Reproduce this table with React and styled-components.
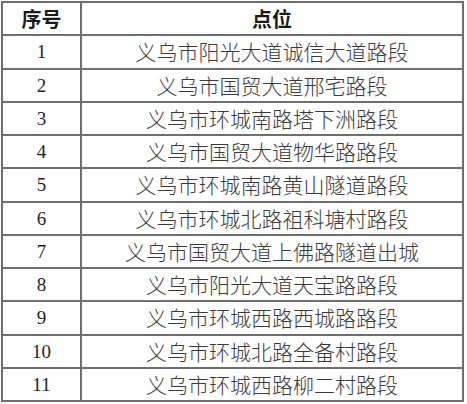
import React from "react";
import styled, { createGlobalStyle } from "styled-components";

const Global = createGlobalStyle`
  html, body { margin: 0; padding: 0; background: #fff; }
`;

const Table = styled.table`
  margin: 1px 0 0 1px;
  width: 463px;
  border-collapse: collapse;
  table-layout: fixed;
  border: 2px solid #6e6e6e;
`;

const Row = styled.tr`
  height: 33.25px;
`;

const Cell = styled.td`
  border: 2px solid #6e6e6e;
  padding: 0;
  text-align: center;
  vertical-align: middle;
  line-height: 1;
  color: ${(p) => (p.$num ? "#1e1e1e" : "#3a3a3a")};
  font-family: ${(p) =>
    p.$num
      ? '"Liberation Serif", serif'
      : '"Noto Sans CJK SC", sans-serif'};
  font-size: ${(p) => (p.$num ? "19px" : "21px")};
  font-weight: ${(p) => (p.$num ? 400 : 300)};
`;

const Head = styled.th`
  border: 2px solid #6e6e6e;
  padding: 0;
  text-align: center;
  vertical-align: middle;
  line-height: 1;
  color: #1a1a1a;
  font-family: "Noto Sans CJK SC", sans-serif;
  font-size: 20px;
  font-weight: 700;
`;

const rows = [
  "义乌市阳光大道诚信大道路段",
  "义乌市国贸大道邢宅路段",
  "义乌市环城南路塔下洲路段",
  "义乌市国贸大道物华路路段",
  "义乌市环城南路黄山隧道路段",
  "义乌市环城北路祖科塘村路段",
  "义乌市国贸大道上佛路隧道出城",
  "义乌市阳光大道天宝路路段",
  "义乌市环城西路西城路路段",
  "义乌市环城北路全备村路段",
  "义乌市环城西路柳二村路段",
];

export default function App() {
  return (
    <>
      <Global />
      <Table>
        <colgroup>
          <col style={{ width: "79px" }} />
          <col />
        </colgroup>
        <thead>
          <Row>
            <Head>序号</Head>
            <Head>点位</Head>
          </Row>
        </thead>
        <tbody>
          {rows.map((r, i) => (
            <Row key={i}>
              <Cell $num>{i + 1}</Cell>
              <Cell>{r}</Cell>
            </Row>
          ))}
        </tbody>
      </Table>
    </>
  );
}
